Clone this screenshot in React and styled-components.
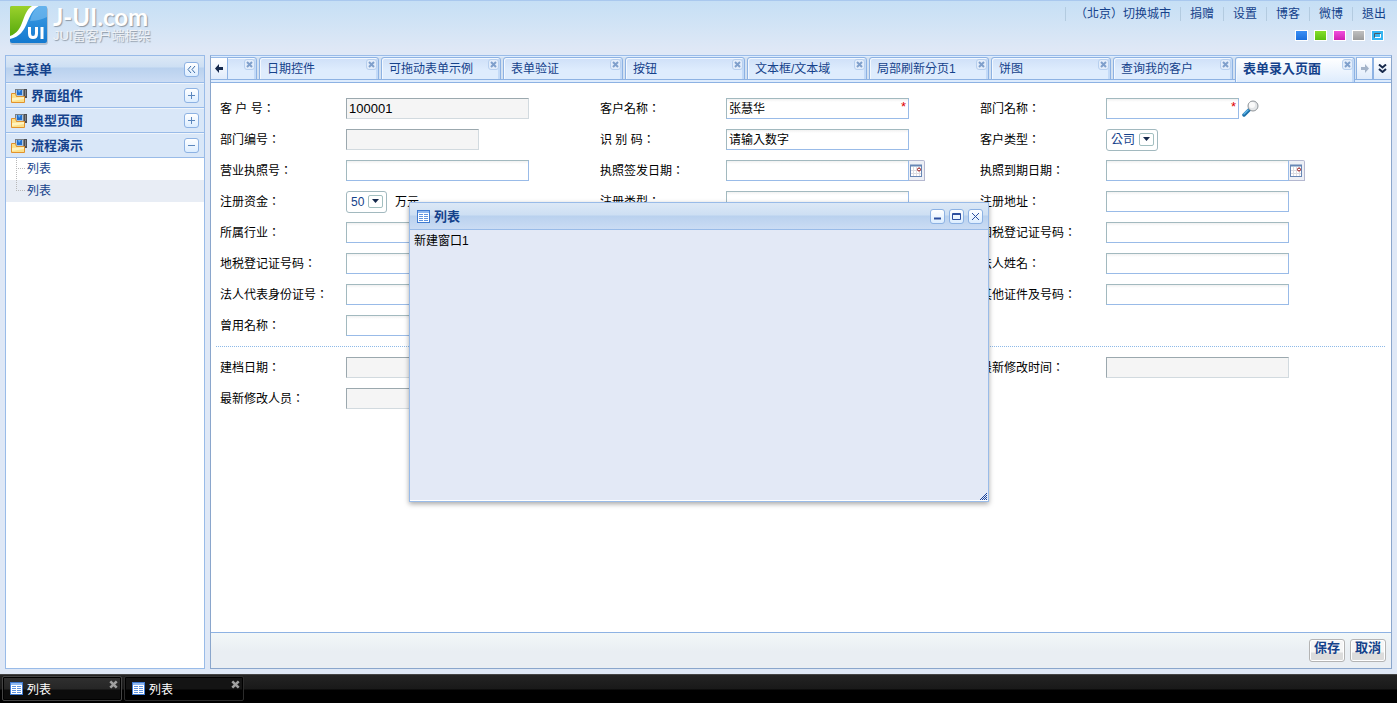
import styled, { createGlobalStyle, css } from "styled-components"

const GlobalStyle = createGlobalStyle`
* {
  box-sizing: border-box;
}
body {
  margin: 0;
  overflow: hidden;
}
body, button, input, select {
  font-family: "Liberation Sans", "Noto Sans CJK TC", sans-serif;
  font-size: 12px;
}
button {
  padding: 0;
  cursor: pointer;
}
a {
  color: #15428b;
  text-decoration: none;
}
ul {
  list-style: none;
  margin: 0;
  padding: 0;
}
svg {
  display: block;
  flex: none;
}
`;

const Page = styled.div`
height: 100vh;
display: flex;
flex-direction: column;
color: #000;
background: linear-gradient(#c5dff5, #dfe8f6 50px);
`;

/* header */

const Header = styled.header`
height: 55px;
flex: none;
display: flex;
justify-content: space-between;
border-top: 1px solid #a9c8ee;
`;

const Logo = styled.a`
display: flex;
gap: 5px;
padding: 5px 0 0 9px;
color: #fff;
text-shadow: 1px 1px 1px #8d98a5;
`;

const LogoText = styled.div``;

const LogoName = styled.div`
font-family: Lato, sans-serif;
font-size: 24px;
font-weight: bold;
line-height: 22px;
`;

const LogoSub = styled.div`
font-size: 13px;
line-height: 16px;
color: #f0f3f7;
`;

const HeaderRight = styled.div`
display: flex;
flex-direction: column;
align-items: flex-end;
padding: 6px 2px 0 0;
`;

const Nav = styled.ul`
display: flex;
`;

const NavItem = styled.li`
height: 14px;
padding: 0 9px;
line-height: 14px;
border-left: 1px solid #b3cbe0;
`;

const Themes = styled.div`
display: flex;
gap: 6px;
padding: 9px 11px 0 0;
`;

const Theme = styled.button`
width: 13px;
height: 11px;
border: 1px solid #fff;
background: ${props=>props.$bg};
display: flex;
align-items: center;
justify-content: center;
`;

/* layout */

const Workspace = styled.div`
flex: 1;
min-height: 0;
display: flex;
gap: 5px;
padding: 0 5px 5px;
`;

const Sidebar = styled.aside`
width: 200px;
flex: none;
border: 1px solid #99bbe8;
background-color: #fff;
`;

const barTitle = css`
margin: 0;
font-size: 13px;
font-weight: bold;
color: #15428b;
`;

const SideHeader = styled.div`
height: 27px;
display: flex;
align-items: center;
justify-content: space-between;
padding: 0 5px 0 7px;
border-bottom: 1px solid #99bbe8;
background: linear-gradient(#dce8f6, #cddff3 11px, #b9d1ee 12px, #cbdcf4);
`;

const SideTitle = styled.h2`
${barTitle}
padding-bottom: 2px;
`;

const Group = styled.button`
width: 100%;
height: 25px;
display: flex;
align-items: center;
gap: 4px;
padding: 0 5px;
border: 0;
border-top: 1px solid #f0f5fb;
border-bottom: 1px solid #99bbe8;
background-color: #d9e7f8;
${barTitle}
`;

const GroupName = styled.span`
flex: 1;
padding-bottom: 3px;
text-align: left;
`;

const SquareButton = styled.button`
width: 15px;
height: 15px;
flex: none;
border: 1px solid #8db2e3;
border-radius: 3px;
background: linear-gradient(#fff, #dcedff);
display: flex;
align-items: center;
justify-content: center;
`;

const SquareMark = styled(SquareButton).attrs({ as: "span" })``;

const TreeItem = styled.li`
height: 22px;
display: flex;
gap: 1px;
padding-left: 10px;
line-height: 22px;
background-color: ${props=>props.$hover ? "#e8edf5" : "#fff"};
`;

const Main = styled.main`
flex: 1;
min-width: 0;
display: flex;
flex-direction: column;
border: 1px solid #8aa6cc;
border-top-color: #99bbe8;
background-color: #fff;
`;

/* tabs */

const TabBar = styled.div`
height: 27px;
flex: none;
display: flex;
padding-top: 1px;
background-color: #deecfd;
border-bottom: 1px solid #8db2e3;
`;

const ScrollButton = styled.button`
width: ${props=>props.$width}px;
height: 23px;
flex: none;
border: 1px solid #8db2e3;
border-width: 1px ${props=>props.$last ? 0 : 1}px 1px ${props=>props.$first ? 0 : 1}px;
border-top-color: #99bbe8;
background: linear-gradient(#fff, #dfebfb);
display: flex;
align-items: center;
justify-content: center;
`;

const TabList = styled.ul`
flex: 1;
min-width: 0;
height: 25px;
display: flex;
justify-content: flex-end;
gap: 2px;
padding-right: 1px;
overflow: hidden;
background: linear-gradient(#deecfd, #deecfd) 0 23px / 100% 4px no-repeat, linear-gradient(#8db2e3, #8db2e3) 0 22px / 100% 1px no-repeat, #d3e1f1;
`;

const Tab = styled.li`
width: 120px;
height: ${props=>props.$active ? 25 : 23}px;
flex: none;
display: flex;
justify-content: space-between;
border: 1px solid #8db2e3;
border-bottom: ${props=>props.$active ? 0 : "1px solid #8db2e3"};
border-radius: 3px 3px 0 0;
box-shadow: inset 1px 1px #f3f8fe, inset -2px 0 #c3daf7;
background: ${props=>props.$active ? "linear-gradient(#fff, #deecfd)" : "linear-gradient(#cfe0f8, #deecfd 12px)"};
padding: 0 1px 0 7px;
`;

const TabLink = styled.a`
line-height: 22px;
white-space: nowrap;
font-size: ${props=>props.$active ? 13 : 12}px;
font-weight: ${props=>props.$active ? "bold" : "normal"};
`;

const TabClose = styled.button`
width: 11px;
height: 11px;
margin-top: 1px;
border: 1px solid #b7cfee;
border-radius: 3px;
background-color: #e3edfb;
display: flex;
align-items: center;
justify-content: center;
`;

/* form */

const Form = styled.form`
flex: 1;
min-height: 0;
display: flex;
flex-direction: column;
`;

const FormBody = styled.div`
flex: 1;
min-height: 0;
padding: 15px 5px 0;
`;

const Fields = styled.div`
display: grid;
grid-template-columns: repeat(3, minmax(0, 1fr));
row-gap: 10px;
padding: 0 26px 0 4px;
`;

const Field = styled.div`
grid-column: ${props=>props.$col};
height: 21px;
display: flex;
align-items: center;
`;

const Label = styled.label`
width: 126px;
flex: none;
line-height: 21px;
padding-top: 2px;
white-space: pre;
`;

const InputWrap = styled.span`
position: relative;
display: flex;
`;

const Input = styled.input`
width: ${props=>props.$short ? 133 : 183}px;
height: 21px;
padding: 0 2px 2px;
outline: 0;
border-radius: 0;
border: 1px solid #99bbe8;
border-top-color: #a2b9bf;
border-left-color: #a2b9bf;
background: linear-gradient(#f1f1f1, #fff 3px);
color: #000;
&:read-only {
  padding-bottom: 0;
  font-size: 13px;
  border-color: #9ba8ae #d2dadf #d2dadf #9ba8ae;
  background: #f5f5f5;
}
`;

const Star = styled.span`
position: absolute;
top: 2px;
right: 3px;
font-size: 13px;
line-height: 13px;
color: #e00000;
`;

const DateButton = styled.button`
width: 16px;
height: 21px;
border: 1px solid #b4b8d0;
border-left: 0;
border-radius: 0 2px 0 0;
background-color: #eef0f6;
display: flex;
align-items: center;
justify-content: center;
`;

const LookButton = styled.button`
border: 0;
background: none;
margin-left: 3px;
`;

const SelectWrap = styled.span`
position: relative;
display: flex;
`;

const Select = styled.select`
appearance: none;
height: 22px;
padding: 0 21px 0 4px;
border: 1px solid #a2b9bf;
border-radius: 3px;
outline: 0;
background-color: #fff;
color: #15428b;
`;

const SelectArrow = styled.span`
position: absolute;
top: 4px;
right: 4px;
width: 15px;
height: 13px;
border: 1px solid #a2bfc0;
border-radius: 2px;
display: flex;
align-items: center;
justify-content: center;
pointer-events: none;
`;

const Unit = styled.span`
margin-left: 8px;
line-height: 21px;
padding-top: 2px;
`;

const Divider = styled.hr`
height: 1px;
margin: 10px 0;
border: 0;
background: repeating-linear-gradient(90deg, #8db9e8 0 1px, #fff 1px 2px);
`;

const FormBar = styled.div`
height: 36px;
flex: none;
display: flex;
justify-content: flex-end;
align-items: flex-start;
gap: 5px;
padding: 6px 5px 0 0;
border-top: 1px solid #8db2e3;
background: linear-gradient(#f2f7f8, #e9eef3 18px);
`;

const BarButton = styled.button`
height: 23px;
padding: 0 4px 5px;
border: 1px solid #b4b4b4;
border-radius: 3px;
box-shadow: inset 0 0 0 1px #fff;
background: linear-gradient(#f6f6f6 12px, #dcdcdc 13px);
line-height: 16px;
${barTitle}
`;

/* window */

const Window = styled.section`
position: absolute;
top: 202px;
left: 409px;
width: 580px;
height: 300px;
display: flex;
flex-direction: column;
border: 1px solid #99bbe8;
background-color: #e3e9f6;
box-shadow: 0 2px 5px rgba(0, 0, 0, 0.35);
`;

const WindowHeader = styled.div`
height: 27px;
flex: none;
display: flex;
align-items: center;
gap: 4px;
padding: 0 5px 0 7px;
border-bottom: 1px solid #99bbe8;
background: linear-gradient(#dce8f6, #cddff3 12px, #b9d1ee 13px, #cbdcf4);
`;

const WindowTitle = styled.h2`
flex: 1;
${barTitle}
padding-bottom: 2px;
`;

const WindowBody = styled.div`
flex: 1;
padding: 2px 4px;
line-height: 18px;
border-bottom: 1px solid #fff;
`;

const Grip = styled.span`
position: absolute;
right: 1px;
bottom: 1px;
`;

/* taskbar */

const TaskBar = styled.footer`
height: 29px;
flex: none;
display: flex;
gap: 2px;
padding: 1px 2px 0;
border-top: 1px solid #444;
background: linear-gradient(#232323, #191919 14px, #000 15px);
`;

const Task = styled.div`
width: 120px;
height: 25px;
display: flex;
justify-content: space-between;
padding: 0 3px 0 7px;
border: 1px solid ${props=>props.$active ? "#444" : "#2c2c2c"};
border-radius: 2px;
box-shadow: inset 0 0 0 1px #000;
background: ${props=>props.$active ? "linear-gradient(#303030, #262626 12px, #0c0c0c 13px)" : "linear-gradient(#141414 12px, #000 13px)"};
`;

const TaskLink = styled.a`
display: flex;
align-items: center;
gap: 4px;
color: #fff;
`;

const TaskClose = styled.button`
height: 9px;
margin-top: 3px;
border: 0;
background: none;
`;

/* icons */

const LogoIcon = () => (
    <svg width="39" height="39" viewBox="0 0 39 39">
        <defs>
            <linearGradient id="logoGreen" x1="0" y1="0" x2="0" y2="1">
                <stop offset="0" stopColor="#9bd12c"/>
                <stop offset="1" stopColor="#54a80c"/>
            </linearGradient>
            <linearGradient id="logoBlue" x1="0" y1="0" x2="0" y2="1">
                <stop offset="0" stopColor="#3f9ee6"/>
                <stop offset="1" stopColor="#1379cf"/>
            </linearGradient>
        </defs>
        <rect x="1" y="1" width="38" height="38" rx="3" fill="#9aa9b8" opacity="0.6"/>
        <rect x="1" width="37" height="37" rx="2" fill="url(#logoBlue)"/>
        <path d="M3 0H24C11 8 20 26 1 31V2Q1 0 3 0Z" fill="url(#logoGreen)"/>
        <path d="M23 0H30C16 7 21 29 1 33V30C16 25 12 7 23 0Z" fill="#fff"/>
        <path d="M30 0H36Q38 0 38 2V11Q30 15 21 15Q23 5 30 0Z" fill="#8cc8f4" opacity="0.5"/>
        <path d="M20.500 21V27.500Q20.500 31.500 24 31.500Q27.500 31.500 27.500 27.500V21M33 21V33" fill="none" stroke="#fff" strokeWidth="3"/>
    </svg>
)

const FolderIcon = () => (
    <svg width="16" height="16" viewBox="0 0 16 16">
        <rect x="4" y="1" width="12" height="9" fill="#7a8086"/>
        <rect x="5" y="2" width="7" height="6" fill="#a9c4e0"/>
        <path d="M6 2H11V7H6Z" fill="#1f6fd0"/>
        <path d="M7 2H10L8 5Z" fill="#6db4f5"/>
        <path d="M13 1H16V10H13Z" fill="#4c4f54"/>
        <path d="M14 3H15M14 5H15M14 7H15" stroke="#b9bcc0"/>
        <path d="M0.500 5.500H4.500L5.500 8.500H13.500V14.500H0.500Z" fill="#fbe08a" stroke="#e2922c"/>
        <path d="M1 10L13 9V11L1 13Z" fill="#fff3bf"/>
    </svg>
)

const GridIcon = () => (
    <svg width="13" height="13" viewBox="0 0 13 13" shapeRendering="crispEdges">
        <rect width="13" height="13" fill="#3f7ad0"/>
        <rect x="1" y="1" width="11" height="2" fill="#8fb8f0"/>
        <rect x="1" y="3" width="11" height="9" fill="#fff"/>
        <path d="M2 4.500H6M7 4.500H11M2 6.500H6M7 6.500H11M2 8.500H6M7 8.500H11M2 10.500H6M7 10.500H11" stroke="#5f93e0"/>
    </svg>
)

const MarkIcon = ({ d, color = "#5c87bd", width = 1 }) => (
    <svg width="9" height="9" viewBox="0 0 9 9" fill="none" stroke={color} strokeWidth={width}>
        <path d={d}/>
    </svg>
)

const CloseIcon = ({ color, size = 7 }) => (
    <svg width={size} height={size} viewBox="0 0 7 7">
        <path d="M1 1L6 6M6 1L1 6" stroke={color} strokeWidth="2"/>
    </svg>
)

const ArrowIcon = ({ color, flip }) => (
    <svg width="8" height="9" viewBox="0 0 8 9">
        <path d={flip ? "M8 4.500L4 0V3H0V6H4V9Z" : "M0 4.500L4 0V3H8V6H4V9Z"} fill={color}/>
    </svg>
)

const CalendarIcon = () => (
    <svg width="13" height="13" viewBox="0 0 13 13">
        <rect x="0.500" y="1.500" width="11" height="11" fill="#fff" stroke="#6786b5"/>
        <path d="M0 1.500H12" stroke="#6786b5" strokeWidth="2"/>
        <path d="M3.500 3V12M6.500 3V12M9.500 3V12M1 6.500H11M1 9.500H11" stroke="#dcdce2"/>
        <circle cx="9" cy="5.500" r="1.500" fill="#fff" stroke="#9a1414"/>
    </svg>
)

const LookIcon = () => (
    <svg width="17" height="17" viewBox="0 0 17 17">
        <path d="M7.500 9.500L2 15" stroke="#1c6fa8" strokeWidth="3.500" strokeLinecap="round"/>
        <path d="M6 10L2 14" stroke="#63b8ea" strokeWidth="1.500" strokeLinecap="round"/>
        <circle cx="11" cy="6" r="5" fill="#e4e6e8" stroke="#8f9499"/>
        <circle cx="10" cy="5" r="3" fill="#fafafa"/>
    </svg>
)

const TreeLine = ({ last }) => (
    <svg width="10" height="22" viewBox="0 0 10 22" shapeRendering="crispEdges">
        <path d={last ? "M0.500 0V11M0 10.500H10" : "M0.500 0V22M0 10.500H10"} fill="none" stroke="#b8b8b8" strokeDasharray="1 1"/>
    </svg>
)

const GripIcon = () => (
    <svg width="7" height="7" viewBox="0 0 7 7">
        <path d="M0 7L7 0M2 7L7 2M4 7L7 4M6 7L7 6" stroke="#1c459e"/>
    </svg>
)

/* data */

const links = ["（北京）切换城市", "捐赠", "设置", "博客", "微博", "退出"]

const themes = [
    { name: "blue", bg: "linear-gradient(#3a8ff5, #1a6fdd)" },
    { name: "green", bg: "linear-gradient(#84de2a, #5abf10)" },
    { name: "purple", bg: "linear-gradient(#f04fdc, #cf20b4)" },
    { name: "silver", bg: "linear-gradient(#c0c0c0, #9c9c9c)" },
    { name: "azure", bg: "#35b5f2", current: true },
]

const groups = [
    { name: "界面组件" },
    { name: "典型页面" },
    { name: "流程演示", open: true },
]

const tabs = ["", "日期控件", "可拖动表单示例", "表单验证", "按钮", "文本框/文本域", "局部刷新分页1", "饼图", "查询我的客户", "表单录入页面"]

const baseFields = [
    { col: 1, label: "客 户 号：", value: "100001", readOnly: true },
    { col: 2, label: "客户名称：", value: "张慧华", required: true },
    { col: 3, label: "部门名称：", short: true, required: true, look: true },
    { col: 1, label: "部门编号：", short: true, readOnly: true },
    { col: 2, label: "识 别 码：", value: "请输入数字" },
    { col: 3, label: "客户类型：", select: "公司" },
    { col: 1, label: "营业执照号：" },
    { col: 2, label: "执照签发日期：", date: true },
    { col: 3, label: "执照到期日期：", date: true },
    { col: 1, label: "注册资金：", select: "50", unit: "万元" },
    { col: 2, label: "注册类型：" },
    { col: 3, label: "注册地址：" },
    { col: 1, label: "所属行业：" },
    { col: 3, label: "国税登记证号码：" },
    { col: 1, label: "地税登记证号码：" },
    { col: 3, label: "法人姓名：" },
    { col: 1, label: "法人代表身份证号：" },
    { col: 3, label: "其他证件及号码：" },
    { col: 1, label: "曾用名称：" },
]

const recordFields = [
    { col: 1, label: "建档日期：", readOnly: true },
    { col: 3, label: "最新修改时间：", readOnly: true },
    { col: 1, label: "最新修改人员：", readOnly: true },
]

const FormField = ({ id, item }) => (
    <Field $col={item.col}>
        <Label htmlFor={id}>{item.label}</Label>
        {item.select ? (
            <SelectWrap>
                <Select id={id}>
                    <option>{item.select}</option>
                </Select>
                <SelectArrow>
                    <svg width="7" height="4" viewBox="0 0 7 4"><path d="M0 0H7L3.500 4Z" fill="#15284b"/></svg>
                </SelectArrow>
            </SelectWrap>
        ) : (
            <InputWrap>
                <Input id={id} type="text" defaultValue={item.value} readOnly={item.readOnly} $short={item.short}/>
                {item.required && <Star>*</Star>}
            </InputWrap>
        )}
        {item.unit && <Unit>{item.unit}</Unit>}
        {item.date && <DateButton type="button" aria-label="日期"><CalendarIcon/></DateButton>}
        {item.look && <LookButton type="button" aria-label="查找"><LookIcon/></LookButton>}
    </Field>
)

const App = () => {
    return (
        <Page>
            <GlobalStyle/>
            <Header>
                <Logo href="#">
                    <LogoIcon/>
                    <LogoText>
                        <LogoName>J-UI.com</LogoName>
                        <LogoSub>JUI富客户端框架</LogoSub>
                    </LogoText>
                </Logo>
                <HeaderRight>
                    <Nav>
                        {links.map((link) => (
                            <NavItem key={link}><a href="#">{link}</a></NavItem>
                        ))}
                    </Nav>
                    <Themes>
                        {themes.map((theme) => (
                            <Theme key={theme.name} type="button" aria-label={theme.name} $bg={theme.bg}>
                                {theme.current && (
                                    <svg width="7" height="5" viewBox="0 0 7 5" fill="none">
                                        <path d="M0.500 4.500V0.500H6.500" stroke="#4f5a62"/>
                                        <path d="M1 4.500H6.500V1" stroke="#fff"/>
                                    </svg>
                                )}
                            </Theme>
                        ))}
                    </Themes>
                </HeaderRight>
            </Header>
            <Workspace>
                <Sidebar>
                    <SideHeader>
                        <SideTitle>主菜单</SideTitle>
                        <SquareButton type="button" aria-label="收起"><MarkIcon d="M4 1L1 4.500L4 8M8 1L5 4.500L8 8" color="#3f6ea8"/></SquareButton>
                    </SideHeader>
                    {groups.map((group) => (
                        <Group key={group.name} type="button">
                            <FolderIcon/>
                            <GroupName>{group.name}</GroupName>
                            <SquareMark><MarkIcon d={group.open ? "M1 4.500H8" : "M1 4.500H8M4.500 1V8"}/></SquareMark>
                        </Group>
                    ))}
                    <ul>
                        <TreeItem><TreeLine/><a href="#">列表</a></TreeItem>
                        <TreeItem $hover><TreeLine last/><a href="#">列表</a></TreeItem>
                    </ul>
                </Sidebar>
                <Main>
                    <TabBar>
                        <ScrollButton type="button" aria-label="向左" $width={17} $first><ArrowIcon color="#15284b"/></ScrollButton>
                        <TabList>
                            {tabs.map((tab) => {
                                const active = tab === "表单录入页面"
                                return (
                                    <Tab key={tab} $active={active}>
                                        <TabLink href="#" $active={active}>{tab}</TabLink>
                                        <TabClose type="button" aria-label="关闭"><CloseIcon color="#7f9fcb"/></TabClose>
                                    </Tab>
                                )
                            })}
                        </TabList>
                        <ScrollButton type="button" aria-label="向右" $width={17}><ArrowIcon color="#a3b3c8" flip/></ScrollButton>
                        <ScrollButton type="button" aria-label="更多" $width={18} $last>
                            <MarkIcon d="M1 0.500L4.500 3.500L8 0.500M1 5L4.500 8L8 5" color="#15284b" width={2}/>
                        </ScrollButton>
                    </TabBar>
                    <Form>
                        <FormBody>
                            <Fields>
                                {baseFields.map((item, i) => <FormField key={item.label} id={`base${i}`} item={item}/>)}
                            </Fields>
                            <Divider/>
                            <Fields>
                                {recordFields.map((item, i) => <FormField key={item.label} id={`record${i}`} item={item}/>)}
                            </Fields>
                        </FormBody>
                        <FormBar>
                            <BarButton type="button">保存</BarButton>
                            <BarButton type="button">取消</BarButton>
                        </FormBar>
                    </Form>
                </Main>
            </Workspace>
            <TaskBar>
                <Task $active>
                    <TaskLink href="#"><GridIcon/>列表</TaskLink>
                    <TaskClose type="button" aria-label="关闭"><CloseIcon color="#a0a0a0" size={9}/></TaskClose>
                </Task>
                <Task>
                    <TaskLink href="#"><GridIcon/>列表</TaskLink>
                    <TaskClose type="button" aria-label="关闭"><CloseIcon color="#a0a0a0" size={9}/></TaskClose>
                </Task>
            </TaskBar>
            <Window>
                <WindowHeader>
                    <GridIcon/>
                    <WindowTitle>列表</WindowTitle>
                    <SquareButton type="button" aria-label="最小化"><MarkIcon d="M1 6.500H8" color="#2c4f9e" width={2}/></SquareButton>
                    <SquareButton type="button" aria-label="最大化"><MarkIcon d="M0.500 1.500H8.500V7.500H0.500ZM0.500 2.500H8.500" color="#2c4f9e"/></SquareButton>
                    <SquareButton type="button" aria-label="关闭"><MarkIcon d="M1 1L8 8M8 1L1 8" color="#2c4f9e"/></SquareButton>
                </WindowHeader>
                <WindowBody>新建窗口1</WindowBody>
                <Grip><GripIcon/></Grip>
            </Window>
        </Page>
    )
}

export default App
